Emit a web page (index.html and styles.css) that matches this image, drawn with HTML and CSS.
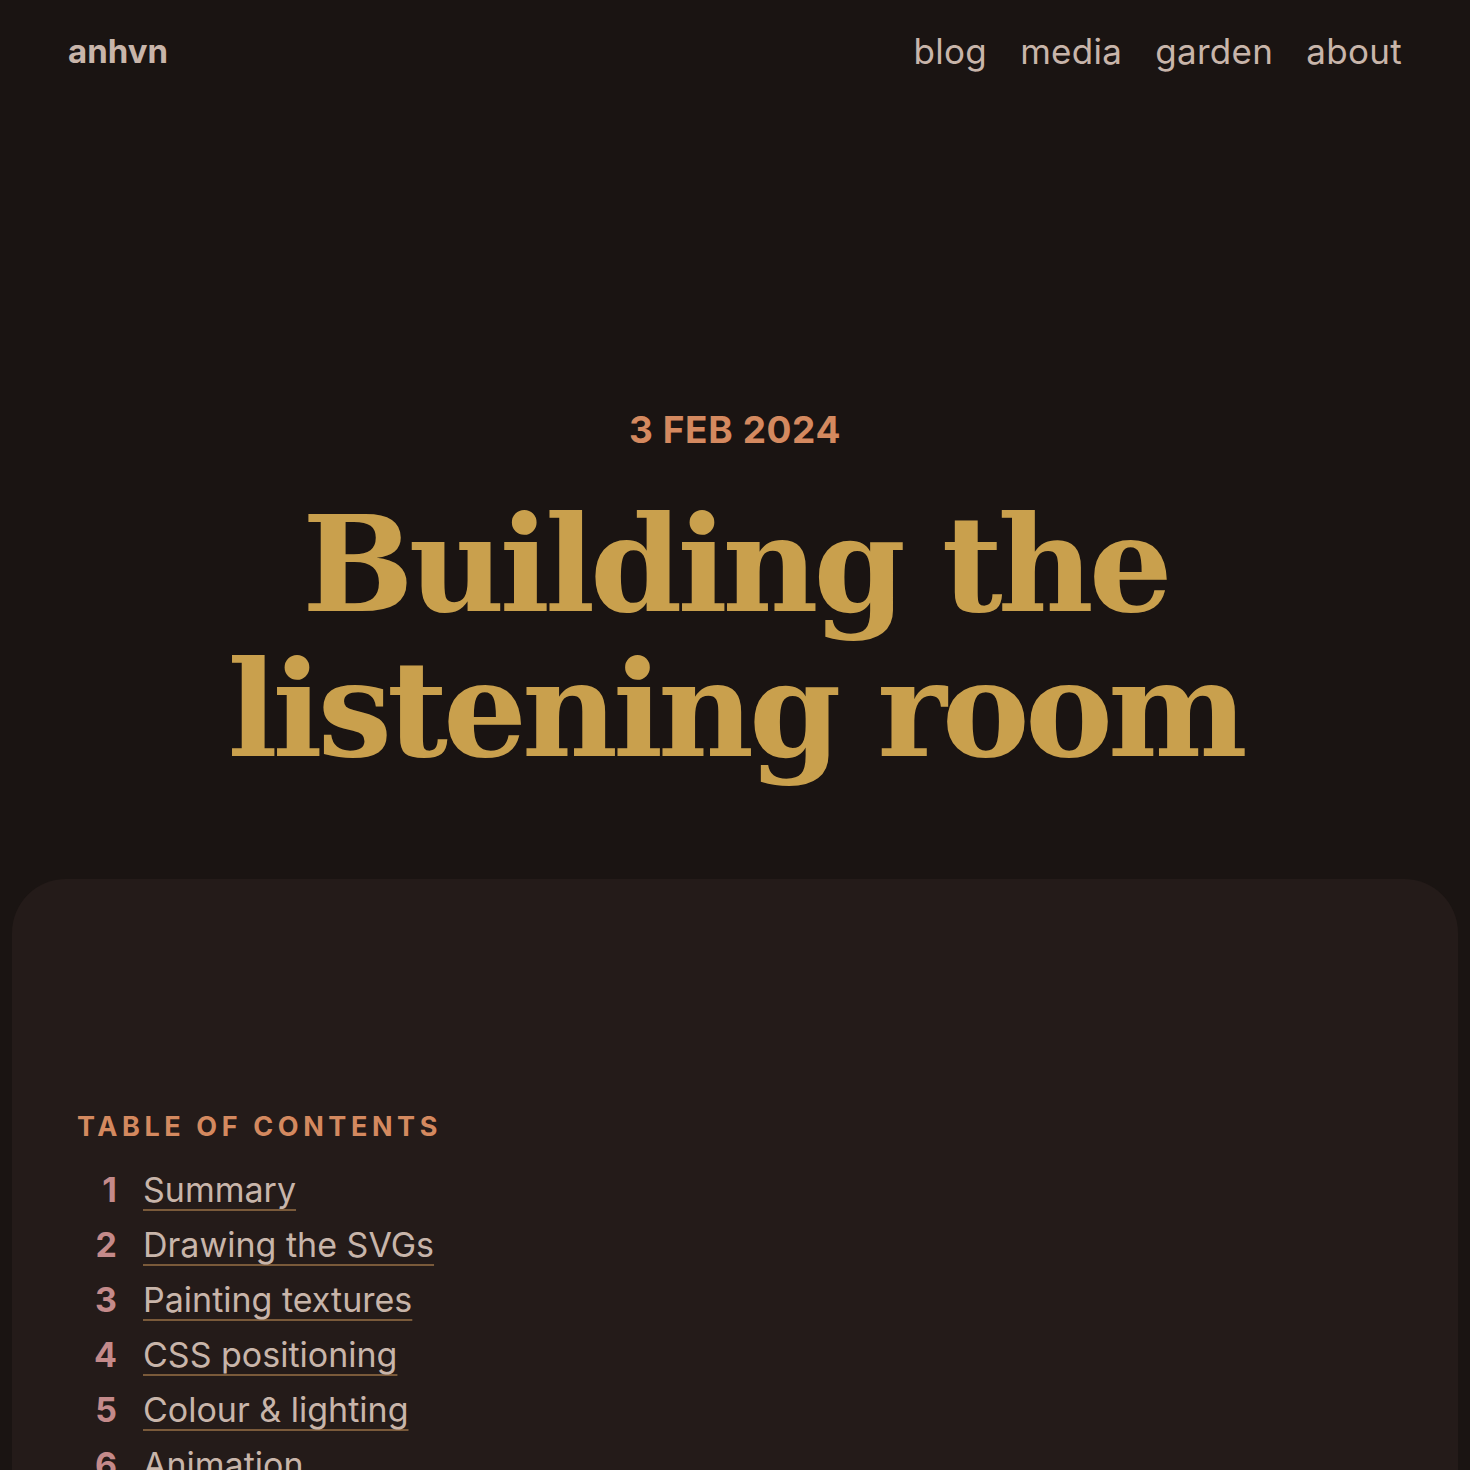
FILE: index.html
```html
<!DOCTYPE html>
<html lang="en">
<head>
<meta charset="utf-8">
<title>Building the listening room</title>
<link rel="stylesheet" href="styles.css">
</head>
<body>
<header class="site-header">
  <a class="logo" href="#">anhvn</a>
  <nav class="nav">
    <a href="#">blog</a>
    <a href="#">media</a>
    <a href="#">garden</a>
    <a href="#">about</a>
  </nav>
</header>
<section class="hero">
  <div class="date">3 FEB 2024</div>
  <h1 class="title">Building the<br>listening room</h1>
</section>
<main class="card">
  <div class="toc">
    <h2 class="toc-title">TABLE OF CONTENTS</h2>
    <ol class="toc-list">
      <li><span class="num">1</span><a href="#">Summary</a></li>
      <li><span class="num">2</span><a href="#">Drawing the SVGs</a></li>
      <li><span class="num">3</span><a href="#">Painting textures</a></li>
      <li><span class="num">4</span><a href="#">CSS positioning</a></li>
      <li><span class="num">5</span><a href="#">Colour &amp; lighting</a></li>
      <li><span class="num">6</span><a href="#">Animation</a></li>
    </ol>
  </div>
</main>
</body>
</html>
```
FILE: styles.css
```css
html, body {
  margin: 0;
  padding: 0;
  background: #1a1412;
  overflow: hidden;
}
body {
  font-family: "Inter", sans-serif;
  color: #c8b5aa;
  height: 1470px;
}
a { color: inherit; text-decoration: none; }

.site-header {
  display: flex;
  justify-content: space-between;
  align-items: center;
  padding: 26px 68px 0 68px;
  height: 50px;
}
.logo {
  font-weight: 700;
  font-size: 33px;
  letter-spacing: 0;
}
.nav {
  display: flex;
  gap: 33px;
  font-size: 35px;
  font-weight: 400;
  letter-spacing: 0.3px;
}

.hero {
  text-align: center;
  padding-top: 330px;
  height: 803px;
  box-sizing: border-box;
}
.date {
  font-weight: 700;
  font-size: 37px;
  color: #d4895f;
  letter-spacing: 0.6px;
  line-height: 48px;
}
.title {
  margin: 38px 0 0 0;
  font-family: "DejaVu Serif", serif;
  font-weight: 700;
  font-size: 132px;
  line-height: 145px;
  color: #c9a04d;
  letter-spacing: -5px;
}

.card {
  margin: 0 12px;
  background: #241b19;
  border-radius: 54px 54px 0 0;
  height: 700px;
  padding: 230px 65px 0 65px;
  box-sizing: border-box;
}
.toc-title {
  margin: 0;
  font-weight: 700;
  font-size: 27px;
  letter-spacing: 4.6px;
  color: #d4895f;
  line-height: 36px;
}
.toc-list {
  list-style: none;
  margin: 24px 0 0 0;
  padding: 0;
  font-size: 34px;
}
.toc-list li {
  display: flex;
  align-items: baseline;
  height: 55px;
}
.num {
  width: 40px;
  text-align: right;
  font-weight: 700;
  color: #c48a8a;
  margin-right: 26px;
}
.toc-list a {
  line-height: 38px;
  text-decoration: underline;
  text-decoration-color: #7a5a3a;
  text-decoration-thickness: 2px;
  text-underline-offset: 7px;
}
```
